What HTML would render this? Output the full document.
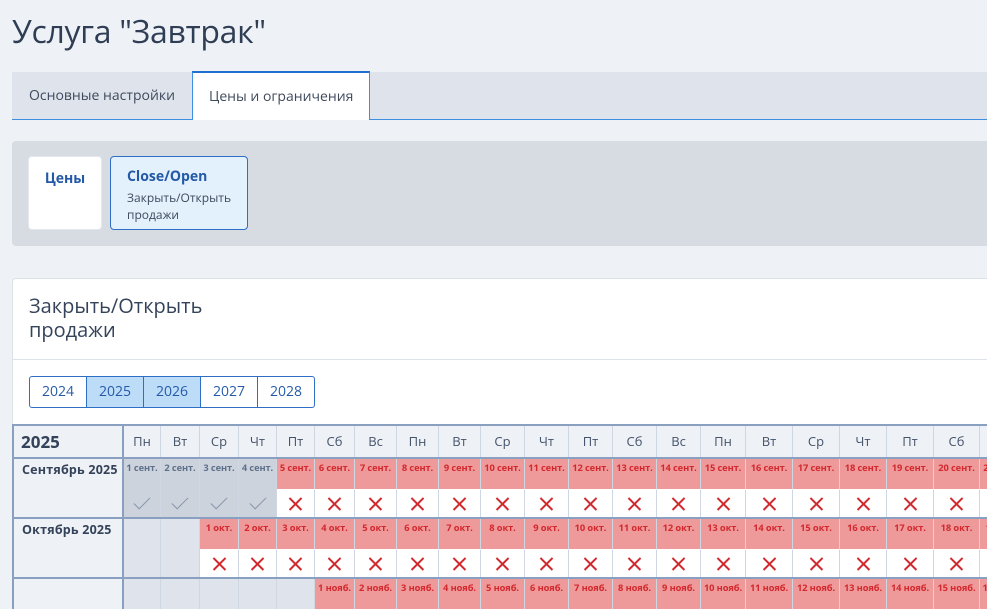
<!DOCTYPE html>
<html><head><meta charset="utf-8">
<style>
*{box-sizing:border-box;margin:0;padding:0}
body{width:987px;height:585px;overflow:hidden;background:#eef2f6;font-family:"Open Sans","Liberation Sans","DejaVu Sans",sans-serif;color:#34435a;position:relative}
.abs{position:absolute}
h1{position:absolute;left:12px;top:10px;font-size:32px;font-weight:400;color:#2f3e55;letter-spacing:-0.3px}
.tabs{left:12px;top:72px;width:975px;height:48px;background:#dfe3eb;border-bottom:1px solid #3d8fe0}
.tab1{left:12px;top:72px;width:180px;height:47px;font-size:14px;line-height:48px;padding-left:17px;color:#3f4a5c}
.tab2{left:192px;top:71px;width:178px;height:49px;background:#fff;border-top:2px solid #1f6fd1;border-left:1px solid #3d8fe0;border-right:1px solid #3d8fe0;font-size:14px;line-height:48px;padding-left:16px;color:#3f4a5c}
.sub{left:12px;top:141px;width:975px;height:105px;background:#d7dce3;border-radius:4px 0 0 4px}
.c1{left:28px;top:156px;width:74px;height:74px;background:#fff;border-radius:4px;border:1px solid #e4e8ee;font-weight:700;color:#2459a8;font-size:14px;text-align:center;padding-top:12px}
.c2{left:110px;top:156px;width:138px;height:74px;background:#e3f1fc;border:1px solid #2c6fc5;border-radius:4px;padding:10px 0 0 16px}
.c2 b{display:block;color:#2459a8;font-size:14px}
.c2 span{display:block;font-size:12px;line-height:17px;color:#3f4a5c;margin-top:3px}
.card{left:12px;top:278px;width:975px;height:310px;background:#fff;border:1px solid #dde2e8;border-right:none;border-radius:4px 0 0 0}
.ct{left:29px;top:294px;font-size:20px;line-height:24px;color:#34435a}
.div{left:13px;top:359px;width:974px;height:1px;background:#dde2e8}
.yrs{left:29px;top:376px;display:flex;border:1px solid #2c6fc5;border-radius:3px;overflow:hidden}
.yrs div{width:57px;height:30px;line-height:29px;text-align:center;font-size:14px;color:#2459a8;border-left:1px solid #2c6fc5}
.yrs div:first-child{border-left:none;width:56px}
.yrs .on{background:#bcdcf7}
.grid{display:grid;grid-template-columns:110px 37px 39px 39px 38px 38px 40px 42px 42px 42px 44px 44px 44px 44px 44px 45px 47px 47px 47px 47px 46px 44px}
.tbl{left:12px;top:424px;border-top:2px solid #8aa0c0;border-left:2px solid #8aa0c0}
.hd>div{height:31px;background:#eef1f5;border-right:1px solid #cfd7e2;font-size:13px;color:#44536a;text-align:center;line-height:31px}
.hd>div:first-child{font-size:17px;font-weight:700;text-align:left;padding-left:7px;color:#34435a;border-right:2px solid #8aa0c0}
.mo{border-top:2px solid #8aa0c0}
.mo>div{border-right:1px solid #cfd7e2}
.mo .l{grid-row:1/3;background:#eef1f5;font-weight:700;font-size:12.5px;padding:2px 0 0 8px;color:#34435a;border-right:2px solid #8aa0c0;letter-spacing:.2px}
.e{grid-row:1/3;background:#dfe3eb}
.d{grid-row:1;height:30px;font-size:9.3px;font-weight:700;text-align:center;line-height:18px;white-space:nowrap;overflow:hidden;letter-spacing:-0.1px}
.m{grid-row:2;height:28px;position:relative}
.g{background:#cdd3dc;color:#5d6f8a}
.p{background:#ef9a9a;color:#d2282e}
.w{background:#fff;border-top:1px solid #fff}
.x::before,.x::after{content:"";position:absolute;left:50%;top:50%;width:17px;height:1.8px;background:#d02a2f;margin:-1px 0 0 -8.5px;transform:rotate(45deg)}
.x::after{transform:rotate(-45deg)}
.k::before{content:"";position:absolute;left:50%;top:50%;width:15px;height:7px;border-left:1.6px solid #8796ad;border-bottom:1.6px solid #8796ad;transform:translate(-50%,-75%) rotate(-45deg)}
</style></head><body>
<h1>Услуга "Завтрак"</h1>
<div class="abs tabs"></div>
<div class="abs tab1">Основные настройки</div>
<div class="abs tab2">Цены и ограничения</div>
<div class="abs sub"></div>
<div class="abs c1">Цены</div>
<div class="abs c2"><b>Close/Open</b><span>Закрыть/Открыть<br>продажи</span></div>
<div class="abs card"></div>
<div class="abs ct">Закрыть/Открыть<br>продажи</div>
<div class="abs div"></div>
<div class="abs yrs"><div>2024</div><div class="on">2025</div><div class="on">2026</div><div>2027</div><div>2028</div></div>
<div class="abs tbl">
<div class="grid hd"><div>2025</div><div>Пн</div><div>Вт</div><div>Ср</div><div>Чт</div><div>Пт</div><div>Сб</div><div>Вс</div><div>Пн</div><div>Вт</div><div>Ср</div><div>Чт</div><div>Пт</div><div>Сб</div><div>Вс</div><div>Пн</div><div>Вт</div><div>Ср</div><div>Чт</div><div>Пт</div><div>Сб</div><div>Вс</div></div>
<div class="grid mo">
<div class="l">Сентябрь 2025</div>
<div class="d g">1 сент.</div><div class="d g">2 сент.</div><div class="d g">3 сент.</div><div class="d g">4 сент.</div><div class="d p">5 сент.</div><div class="d p">6 сент.</div><div class="d p">7 сент.</div><div class="d p">8 сент.</div><div class="d p">9 сент.</div><div class="d p">10 сент.</div><div class="d p">11 сент.</div><div class="d p">12 сент.</div><div class="d p">13 сент.</div><div class="d p">14 сент.</div><div class="d p">15 сент.</div><div class="d p">16 сент.</div><div class="d p">17 сент.</div><div class="d p">18 сент.</div><div class="d p">19 сент.</div><div class="d p">20 сент.</div><div class="d p">21 сент.</div>
<div class="m g k"></div><div class="m g k"></div><div class="m g k"></div><div class="m g k"></div><div class="m w x"></div><div class="m w x"></div><div class="m w x"></div><div class="m w x"></div><div class="m w x"></div><div class="m w x"></div><div class="m w x"></div><div class="m w x"></div><div class="m w x"></div><div class="m w x"></div><div class="m w x"></div><div class="m w x"></div><div class="m w x"></div><div class="m w x"></div><div class="m w x"></div><div class="m w x"></div><div class="m w x"></div>
</div>
<div class="grid mo">
<div class="l">Октябрь 2025</div>
<div class="e"></div><div class="e"></div>
<div class="d p">1 окт.</div><div class="d p">2 окт.</div><div class="d p">3 окт.</div><div class="d p">4 окт.</div><div class="d p">5 окт.</div><div class="d p">6 окт.</div><div class="d p">7 окт.</div><div class="d p">8 окт.</div><div class="d p">9 окт.</div><div class="d p">10 окт.</div><div class="d p">11 окт.</div><div class="d p">12 окт.</div><div class="d p">13 окт.</div><div class="d p">14 окт.</div><div class="d p">15 окт.</div><div class="d p">16 окт.</div><div class="d p">17 окт.</div><div class="d p">18 окт.</div><div class="d p">19 окт.</div>
<div class="m w x"></div><div class="m w x"></div><div class="m w x"></div><div class="m w x"></div><div class="m w x"></div><div class="m w x"></div><div class="m w x"></div><div class="m w x"></div><div class="m w x"></div><div class="m w x"></div><div class="m w x"></div><div class="m w x"></div><div class="m w x"></div><div class="m w x"></div><div class="m w x"></div><div class="m w x"></div><div class="m w x"></div><div class="m w x"></div><div class="m w x"></div>
</div>
<div class="grid mo">
<div class="l"></div>
<div class="e"></div><div class="e"></div><div class="e"></div><div class="e"></div><div class="e"></div>
<div class="d p">1 нояб.</div><div class="d p">2 нояб.</div><div class="d p">3 нояб.</div><div class="d p">4 нояб.</div><div class="d p">5 нояб.</div><div class="d p">6 нояб.</div><div class="d p">7 нояб.</div><div class="d p">8 нояб.</div><div class="d p">9 нояб.</div><div class="d p">10 нояб.</div><div class="d p">11 нояб.</div><div class="d p">12 нояб.</div><div class="d p">13 нояб.</div><div class="d p">14 нояб.</div><div class="d p">15 нояб.</div><div class="d p">16 нояб.</div>
</div>
</div>
</body></html>
